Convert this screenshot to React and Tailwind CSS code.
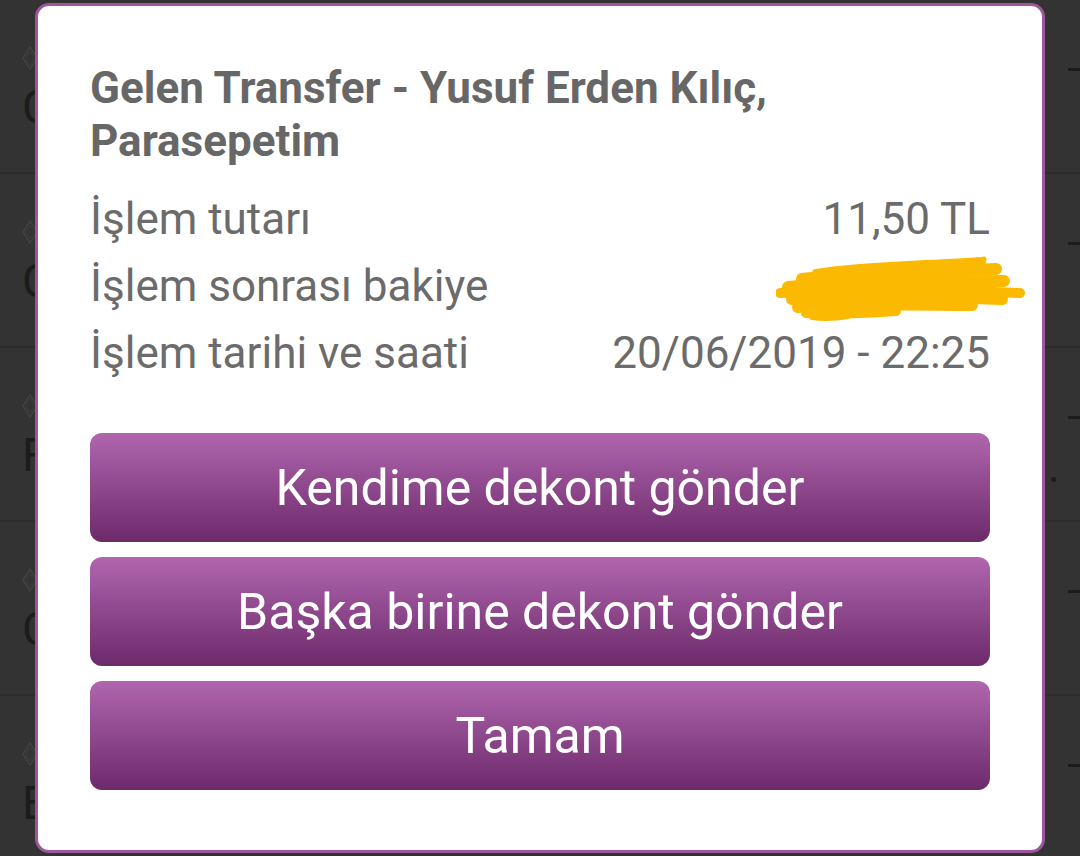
import React from "react";

const letters = ["C", "C", "F", "C", "E"];

function Diamond() {
  return (
    <svg width="16" height="24" viewBox="0 0 16 24" className="block">
      <path d="M8 1 L15 12 L8 23 L1 12 Z" fill="none" stroke="#424242" strokeWidth="1.5" />
      <path d="M8 5 L12 12 L8 19 L4 12 Z" fill="none" stroke="#3e3e3e" strokeWidth="1" />
    </svg>
  );
}

function Scribble() {
  return (
    <svg width="250" height="70" viewBox="0 0 250 70" className="block">
      <g fill="none" stroke="#fbb901" strokeLinecap="round" strokeLinejoin="round">
        <path d="M40 18 C 90 10, 150 10, 206 6" strokeWidth="8" />
        <path d="M26 24 C 90 16, 160 16, 220 14" strokeWidth="12" />
        <path d="M12 32 C 80 26, 170 26, 228 26" strokeWidth="12" />
        <path d="M4 38 C 80 34, 170 34, 244 38" strokeWidth="10" />
        <path d="M16 44 C 90 40, 170 42, 226 44" strokeWidth="12" />
        <path d="M22 52 C 90 48, 150 50, 196 50" strokeWidth="12" />
        <path d="M30 58 C 60 60, 90 58, 120 56" strokeWidth="10" />
        <path d="M36 62 C 50 64, 60 63, 72 61" strokeWidth="6" />
        <path d="M200 8 L 208 4" strokeWidth="5" />
      </g>
    </svg>
  );
}

function Btn({ children }) {
  return (
    <button className="h-[109px] w-full rounded-[12px] bg-gradient-to-b from-[#b066ae] to-[#6d2a6b] text-white text-[50px] leading-none font-['Roboto',sans-serif]">
      {children}
    </button>
  );
}

export default function App() {
  return (
    <div className="relative h-[856px] w-[1080px] overflow-hidden bg-[#333333] font-['Roboto',sans-serif]">
      <div className="flex flex-col">
        {letters.map((l, i) => (
          <div key={i} className="relative flex h-[174px] shrink-0 items-start border-b-2 border-[#2c2c2c]">
            <div className="flex w-full items-start justify-between pt-[46px]">
              <div className="flex flex-col pl-[22px]">
                <Diamond />
                <span className="mt-[14px] text-[46px] leading-none text-[#1c1c1c]">{l}</span>
              </div>
              <div className="mt-[22px] h-[3px] w-[12px] bg-[#1c1c1c]" />
            </div>
          </div>
        ))}
      </div>
      <div className="absolute right-[24px] top-[477px] h-[5px] w-[5px] rounded-full bg-[#1c1c1c]" />

      <div className="absolute left-[35px] top-[3px] h-[850px] w-[1010px] rounded-[14px] border-[3px] border-[#9d559b] bg-white px-[52px] pt-[56px]">
        <div className="text-[44px] font-bold leading-[53px] text-[#676767]">
          Gelen Transfer - Yusuf Erden Kılıç,
          <br />
          Parasepetim
        </div>
        <div className="mt-[18px] flex flex-col text-[44px] leading-[67px] text-[#6b6b6b]">
          <div className="flex justify-between">
            <span>İşlem tutarı</span>
            <span>11,50 TL</span>
          </div>
          <div className="relative flex justify-between">
            <span>İşlem sonrası bakiye</span>
            <div className="absolute right-[-36px] top-[2px]">
              <Scribble />
            </div>
          </div>
          <div className="flex justify-between">
            <span>İşlem tarihi ve saati</span>
            <span>20/06/2019 - 22:25</span>
          </div>
        </div>
        <div className="mt-[46px] flex flex-col gap-[15px]">
          <Btn>Kendime dekont gönder</Btn>
          <Btn>Başka birine dekont gönder</Btn>
          <Btn>Tamam</Btn>
        </div>
      </div>
    </div>
  );
}
